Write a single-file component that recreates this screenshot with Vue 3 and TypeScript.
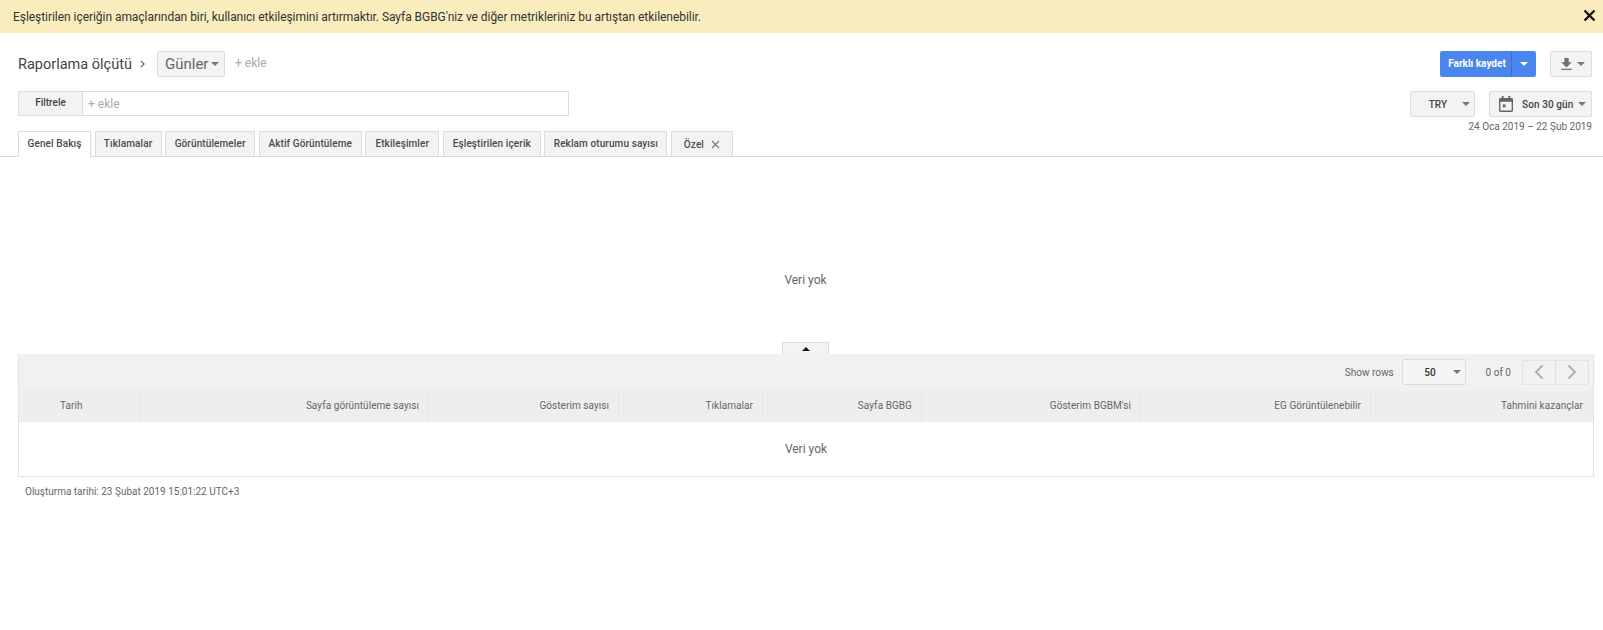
<script setup lang="ts">
interface Col { label: string; width: number }
interface Tab { label: string; width: number }
const tabs: Tab[] = [
  { label: 'Genel Bakış', width: 73 },
  { label: 'Tıklamalar', width: 67 },
  { label: 'Görüntülemeler', width: 90 },
  { label: 'Aktif Görüntüleme', width: 103 },
  { label: 'Etkileşimler', width: 74 },
  { label: 'Eşleştirilen içerik', width: 98 },
  { label: 'Reklam oturumu sayısı', width: 123 }
]
const cols: Col[] = [
  { label: 'Tarih', width: 122 },
  { label: 'Sayfa görüntüleme sayısı', width: 288 },
  { label: 'Gösterim sayısı', width: 190 },
  { label: 'Tıklamalar', width: 144 },
  { label: 'Sayfa BGBG', width: 159 },
  { label: 'Gösterim BGBM\'si', width: 219 },
  { label: 'EG Görüntülenebilir', width: 230 },
  { label: 'Tahmini kazançlar', width: 222 }
]
const gridCols = cols.map(c => c.width + 'px').join(' ')
</script>

<template>
  <div class="page">
    <div class="banner">
      <span>Eşleştirilen içeriğin amaçlarından biri, kullanıcı etkileşimini artırmaktır. Sayfa BGBG'niz ve diğer metrikleriniz bu artıştan etkilenebilir.</span>
      <svg class="close" width="13" height="13" viewBox="0 0 13 13"><path d="M1.500 1.500l10 10M11.500 1.500l-10 10" stroke="#111" stroke-width="2.400" fill="none"/></svg>
    </div>

    <div class="row row1">
      <div class="left">
        <span class="report">Raporlama ölçütü</span>
        <svg class="chev" width="7" height="10" viewBox="0 0 7 10"><path d="M2 2l3 3-3 3" stroke="#666" stroke-width="1.200" fill="none"/></svg>
        <button class="btn dim">Günler<i class="caret"></i></button>
        <span class="add big">+ ekle</span>
      </div>
      <div class="right">
        <div class="save">
          <span class="save-main">Farklı kaydet</span>
          <span class="save-arrow"><i class="caret white"></i></span>
        </div>
        <button class="btn download">
          <svg width="13" height="14" viewBox="0 0 15 16"><path d="M5 1h5v5h3.500L7.500 12 1.500 6H5zM1.500 13.500h12V15h-12z" fill="#707070"/></svg>
          <i class="caret"></i>
        </button>
      </div>
    </div>

    <div class="row row2">
      <div class="filter">
        <span class="filter-label">Filtrele</span>
        <span class="add">+ ekle</span>
      </div>
      <div class="right">
        <button class="btn try"><b>TRY</b><i class="caret"></i></button>
        <button class="btn range">
          <svg width="14" height="16" viewBox="0 0 15 17"><path d="M3 0h2v2h5V0h2v2h1.500A1.500 1.500 0 0 1 15 3.500v12a1.500 1.500 0 0 1-1.500 1.500h-12A1.500 1.500 0 0 1 0 15.500v-12A1.500 1.500 0 0 1 1.500 2H3zM1.500 6v9.500h12V6zM4 9h3v3H4z" fill="#666"/></svg>
          <b>Son 30 gün</b><i class="caret"></i>
        </button>
      </div>
    </div>

    <div class="caption">24 Oca 2019 – 22 Şub 2019</div>

    <div class="tabs">
      <div v-for="(t, i) in tabs" :key="t.label" class="tab" :class="{ active: i === 0 }" :style="{ width: t.width + 'px' }">{{ t.label }}</div>
      <div class="tab custom">Özel
        <svg width="9" height="9" viewBox="0 0 9 9"><path d="M1 1l7 7M8 1L1 8" stroke="#777" stroke-width="1.100" fill="none"/></svg>
      </div>
    </div>

    <div class="chart">Veri yok</div>

    <div class="handle-wrap">
      <div class="handle"><i class="up"></i></div>
    </div>

    <div class="table">
      <div class="toolbar">
        <span class="show">Show rows</span>
        <div class="btn rows"><b>50</b><i class="caret"></i></div>
        <span class="count">0 of 0</span>
        <div class="pager">
          <span class="page-btn"><svg width="10" height="16" viewBox="0 0 10 16"><path d="M8.500 1.500L2 8l6.500 6.500" stroke="#b0b0b0" stroke-width="2" fill="none"/></svg></span>
          <span class="page-btn"><svg width="10" height="16" viewBox="0 0 10 16"><path d="M1.500 1.500L8 8l-6.500 6.500" stroke="#b0b0b0" stroke-width="2" fill="none"/></svg></span>
        </div>
      </div>
      <div class="thead" :style="{ gridTemplateColumns: gridCols }">
        <div v-for="(c, i) in cols" :key="c.label" class="th" :class="{ first: i === 0 }">{{ c.label }}</div>
      </div>
      <div class="tbody">Veri yok</div>
    </div>

    <div class="footer">Oluşturma tarihi: 23 Şubat 2019 15:01:22 UTC+3</div>
  </div>
</template>

<style scoped>
.page {
  font-family: Roboto, "Liberation Sans", sans-serif;
  color: #444;
  font-size: 12px;
  background: #fff;
  height: 630px;
  overflow: hidden;
}
.banner {
  height: 33px;
  background: #f9edbe;
  display: flex;
  align-items: center;
  justify-content: space-between;
  padding: 0 7px 0 13px;
  color: #333;
  font-size: 12px;
  letter-spacing: -0.05px;
}
.close { margin-top: -2px; }
.row {
  display: flex;
  justify-content: space-between;
  align-items: flex-start;
  padding: 0 11px 0 18px;
}
.row1 { margin-top: 18px; height: 26px; }
.row2 { margin-top: 14px; height: 26px; }
.left, .right { display: flex; align-items: center; }
.left { height: 26px; }
.report { font-size: 14.500px; color: #444; width: 115px; white-space: nowrap; }
.chev { margin: 0 11px 0 6px; }
.btn {
  box-sizing: border-box;
  height: 26px;
  display: flex;
  align-items: center;
  background: #f3f3f3;
  border: 1px solid #dcdcdc;
  border-radius: 2px;
  font-family: inherit;
  color: #444;
  padding: 0;
}
.dim { width: 68px; font-size: 15px; padding-left: 7px; color: #666; }
.caret {
  display: inline-block;
  width: 0;
  height: 0;
  border-left: 4px solid transparent;
  border-right: 4px solid transparent;
  border-top: 4px solid #777;
}
.caret.white { border-top-color: #fff; }
.dim .caret { margin-left: 3px; }
.add { color: #aaa; font-size: 12px; }
.big { margin-left: 10px; margin-top: -3px; }
.save {
  width: 96px;
  height: 26px;
  display: flex;
  background: #4a86ee;
  border-radius: 2px;
  color: #fff;
  font-size: 10px;
  font-weight: 700;
}
.save-main { width: 72px; line-height: 26px; text-align: center; white-space: nowrap; padding-left: 3px; box-sizing: border-box; border-right: 1px solid #3a72d0; }
.save-arrow { flex: 1; display: flex; align-items: center; justify-content: center; }
.download { width: 42px; margin-left: 14px; padding-left: 9px; gap: 4px; }
.filter {
  box-sizing: border-box;
  width: 551px;
  height: 25px;
  display: flex;
  align-items: center;
  border: 1px solid #dcdcdc;
}
.filter-label {
  box-sizing: border-box;
  width: 64px;
  height: 100%;
  background: #f3f3f3;
  font-size: 10px;
  font-weight: 500;
  text-align: center;
  line-height: 22px;
  color: #444;
  border-right: 1px solid #dcdcdc;
}
.filter .add { margin-left: 5px; }
.try { width: 65px; font-size: 10px; justify-content: flex-end; padding-right: 4px; }
.try b { font-weight: 500; margin-right: 15px; }
.range { width: 103px; margin-left: 14px; padding-left: 9px; font-size: 10px; }
.range b { font-weight: 500; margin: 0 5px 0 9px; white-space: nowrap; letter-spacing: 0.1px; }
.caption {
  height: 14px;
  line-height: 20px;
  text-align: right;
  padding-right: 11px;
  font-size: 10px;
  color: #666;
}
.tabs {
  display: flex;
  gap: 3.570px;
  box-sizing: border-box;
  height: 26px;
  padding-left: 18px;
  border-bottom: 1px solid #d6d6d6;
}
.tab {
  box-sizing: border-box;
  height: 25px;
  line-height: 23px;
  text-align: center;
  background: #f3f3f3;
  border: 1px solid #dcdcdc;
  border-bottom: none;
  font-size: 10px;
  font-weight: 500;
  letter-spacing: 0.1px;
  white-space: nowrap;
  color: #4a4a4a;
}
.tab.active { background: #fff; height: 26px; line-height: 23px; }
.custom { width: 62px; display: flex; align-items: center; justify-content: center; gap: 7px; }
.chart {
  height: 185px;
  box-sizing: border-box;
  padding: 113px 10px 0 18px;
  line-height: 20px;
  text-align: center;
  color: #666;
}
.handle-wrap {
  display: flex;
  justify-content: center;
  padding: 0 10px 0 18px;
}
.handle {
  box-sizing: border-box;
  width: 47px;
  height: 12px;
  display: flex;
  justify-content: center;
  padding-top: 4px;
  background: #f3f3f3;
  border: 1px solid #dcdcdc;
  border-bottom: none;
}
.up {
  width: 0;
  height: 0;
  border-left: 4px solid transparent;
  border-right: 4px solid transparent;
  border-bottom: 4px solid #111;
}
.table {
  box-sizing: border-box;
  margin: 0 9px 0 18px;
  height: 123px;
  border: 1px solid #e3e3e3;
  border-top: none;
}
.toolbar {
  height: 36px;
  box-sizing: border-box;
  padding-right: 4px;
  background: #f1f1f1;
  display: flex;
  align-items: center;
  justify-content: flex-end;
  font-size: 10px;
  color: #666;
}
.show { margin-right: 8px; }
.rows { width: 64px; justify-content: flex-end; padding-right: 4px; background: #f5f5f5; color: #333; }
.rows b { font-weight: 500; margin-right: 17px; font-size: 10px; }
.count { margin: 0 11px 0 20px; }
.pager { display: flex; border: 1px solid #e3e3e3; height: 25px; box-sizing: border-box; }
.page-btn { width: 32px; display: flex; align-items: center; justify-content: center; }
.page-btn + .page-btn { border-left: 1px solid #e0e0e0; }
.thead {
  display: grid;
  height: 32px;
  background: #eeeeee;
}
.th {
  box-sizing: border-box;
  text-align: right;
  padding-right: 9px;
  line-height: 32px;
  font-size: 10px;
  letter-spacing: 0.06px;
  color: #666;
  border-right: 1px solid #e6e6e6;
  white-space: nowrap;
}
.th:last-child { border-right: none; padding-right: 10px; }
.th.first { text-align: left; padding-left: 41px; }
.tbody {
  height: 54px;
  line-height: 54px;
  text-align: center;
  color: #666;
}
.footer {
  margin: 8px 0 0 25px;
  line-height: 14px;
  font-size: 10px;
  color: #666;
}
</style>
